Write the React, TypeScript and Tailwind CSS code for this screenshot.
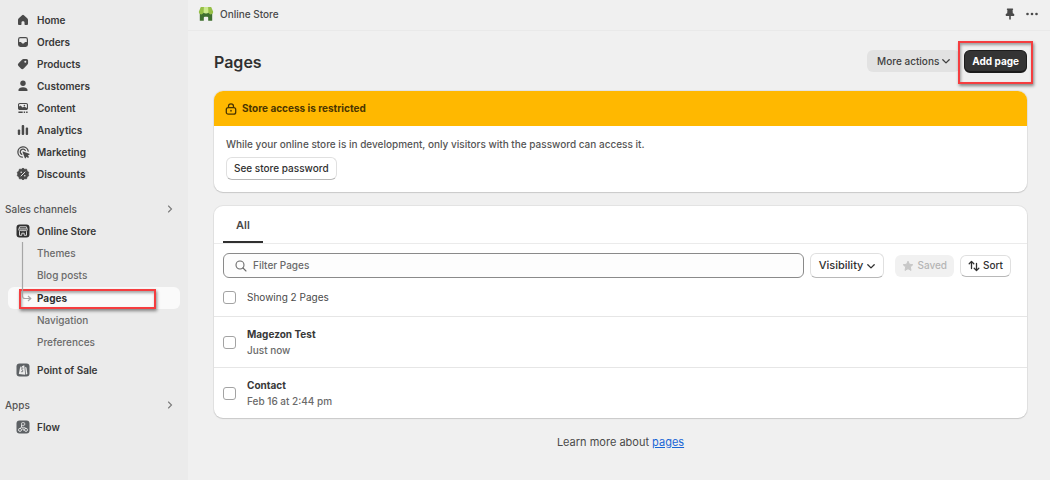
import type { ReactNode } from "react";

function Icon({ children }: { children: ReactNode }) {
  return (
    <svg viewBox="0 0 14 14" className="size-3.5 shrink-0 text-[#4a4a4a]" fill="currentColor" aria-hidden="true">
      {children}
    </svg>
  );
}

const icons = {
  home: (
    <Icon>
      <path d="M6.1 2.2a1.4 1.4 0 0 1 1.8 0l3.3 3c.5.5.8 1 .8 1.7v3.8c0 .9-.5 1.3-1.3 1.3H9.2c-.4 0-.7-.3-.7-.7V9.6c0-.8-.6-1.3-1.5-1.3s-1.5.5-1.5 1.3v1.7c0 .4-.3.7-.7.7H3.300C2.500 12 2 11.600 2 10.700V6.900c0-.7.3-1.200.8-1.700z" />
    </Icon>
  ),
  orders: (
    <Icon>
      <path
        fillRule="evenodd"
        d="M4.400 2h5.200A2.400 2.400 0 0 1 12 4.400v5.200A2.400 2.400 0 0 1 9.600 12H4.400A2.400 2.400 0 0 1 2 9.600V4.400A2.400 2.400 0 0 1 4.400 2zm0 1.200c-.7 0-1.200.5-1.200 1.200v2.700h1.500c.5 0 .7.300.9.700.2.400.5.700 1.400.7s1.200-.3 1.400-.7c.2-.4.4-.7.9-.7h1.500V4.400c0-.7-.5-1.200-1.200-1.200z"
      />
    </Icon>
  ),
  products: (
    <Icon>
      <path
        fillRule="evenodd"
        d="M7.500 2h3a1.600 1.600 0 0 1 1.600 1.600v2.500c0 .6-.2 1.100-.6 1.500l-3.800 3.900a2 2 0 0 1-2.800 0L2.500 9.100a2 2 0 0 1 0-2.800L6 2.700c.4-.5.900-.7 1.500-.7zm1.800 3.700a1 1 0 1 0 0-2 1 1 0 0 0 0 2z"
      />
    </Icon>
  ),
  customers: (
    <Icon>
      <circle cx="7" cy="4.300" r="2.700" />
      <path d="M7 8.200c2.600 0 4.400 1.200 4.600 2.800.1.600-.3 1-.9 1H3.300c-.6 0-1-.4-.9-1C2.600 9.400 4.400 8.200 7 8.200z" />
    </Icon>
  ),
  content: (
    <Icon>
      <path
        fillRule="evenodd"
        d="M3.800 2h6.400C11.200 2 12 2.800 12 3.800v3.400C12 8.200 11.200 9 10.200 9H3.800C2.800 9 2 8.200 2 7.200V3.800C2 2.800 2.800 2 3.800 2zm0 1.100a.7.700 0 0 0-.7.700v1.700l1.400-.9 2.200 1.900 1.500-.9 2.700 1.300V3.800a.7.700 0 0 0-.7-.7zm4.600.600a.8.800 0 1 1 0 1.600.8.800 0 0 1 0-1.600z"
      />
      <path d="M2.400 10.500h4.300v1.400H2.400zM7.700 10.500h1.400v1.400H7.700zM10.100 10.500h1.500v1.400h-1.500z" />
    </Icon>
  ),
  analytics: (
    <Icon>
      <rect x="1.800" y="6.500" width="2.400" height="5.500" rx="1" />
      <rect x="5.700" y="2" width="2.500" height="10" rx="1" />
      <rect x="9.700" y="4.500" width="2.400" height="7.500" rx="1" />
    </Icon>
  ),
  marketing: (
    <Icon>
      <path
        fill="none"
        stroke="currentColor"
        strokeWidth="1.300"
        strokeLinecap="round"
        d="M12.200 6.100A5.200 5.200 0 1 0 6.300 12.200M9.300 5.500A2.700 2.700 0 1 0 5.800 9.300"
      />
      <path d="M7 6.400 13.300 8.700c.5.200.5.800 0 1l-1.500.7 1.300 1.500-1.100 1.100-1.500-1.300-.7 1.400c-.2.500-.8.500-1 0L6.500 7c-.2-.4.100-.7.500-.6z" />
    </Icon>
  ),
  discounts: (
    <Icon>
      <path
        stroke="currentColor"
        strokeWidth=".8"
        strokeLinejoin="round"
        d="M7 1.100 8.600 2.300l2-.1.500 2 1.700 1.100L12.100 7l.7 1.700-1.700 1.100-.5 2-2-.1L7 12.900l-1.600-1.200-2 .1-.5-2L1.200 8.700 1.900 7l-.7-1.700 1.700-1.100.5-2 2 .1z"
      />
      <path fill="none" stroke="#ebebeb" strokeWidth="1" strokeLinecap="round" d="M5 9l4-4" />
      <circle cx="5.200" cy="5.300" r=".8" fill="#ebebeb" />
      <circle cx="8.800" cy="8.700" r=".8" fill="#ebebeb" />
    </Icon>
  ),
  store: (
    <Icon>
      <rect x=".5" y=".5" width="13" height="13" rx="3" fill="#303030" />
      <path
        fill="none"
        stroke="#e8e8e8"
        strokeWidth=".9"
        strokeLinejoin="round"
        d="M3.600 2.800h6.800l.9 2.800c0 1.600-2.100 1.600-2.200.2-.1 1.500-2.100 1.500-2.100 0 0 1.500-2 1.500-2.100 0-.1 1.400-2.200 1.400-2.200-.2zM3.500 7.300v4h2.300V9.200h2.400v2.100h2.300v-4M3.200 4.900h7.600"
      />
    </Icon>
  ),
  pos: (
    <Icon>
      <rect x=".5" y=".5" width="13" height="13" rx="3" fill="#5d6164" />
      <path fill="#ececec" d="M4.200 3.700 8.300 2.300l.9 9.500-6.400-.9zM9.200 3.800l1.300.8.900 6.300-1.500.7z" />
      <path
        fill="none"
        stroke="#5d6164"
        strokeWidth=".9"
        d="M7.300 5.200c-1-.4-1.800.2-1.700.9.100.8 1.400.9 1.300 1.900-.1.800-1 1-1.800.5M5.200 4.600c.1-1.200.7-2 1.400-2"
      />
    </Icon>
  ),
  flow: (
    <Icon>
      <rect x=".5" y=".5" width="13" height="13" rx="3" fill="#5d6164" />
      <g fill="none" stroke="#ececec" strokeWidth=".9">
        <rect x="5.500" y="2.700" width="3.200" height="2.600" rx=".8" />
        <circle cx="4" cy="9.900" r="1.500" />
        <circle cx="10" cy="9.900" r="1.500" />
        <path d="M5.500 5v2.300L4 8.400M5.500 7.300h2L10 8.400M7 10h1.500M7 10V8" />
      </g>
    </Icon>
  ),
};

function NavItem({ icon, label }: { icon: ReactNode; label: string }) {
  return (
    <li>
      <a href="#" className="flex h-[22px] items-center gap-[7px] pl-4 font-semibold text-[#383838]">
        {icon}
        {label}
      </a>
    </li>
  );
}

function SubItem({ label }: { label: string }) {
  return (
    <li>
      <a href="#" className="flex h-[22px] items-center pl-[37px] font-medium text-[#6a6a6a]">
        {label}
      </a>
    </li>
  );
}

function SectionHeading({ label }: { label: string }) {
  return (
    <button type="button" className="flex h-[22px] w-full items-center justify-between pr-3.5 pl-[5px] font-medium text-[#555555]">
      {label}
      <svg viewBox="0 0 8 8" className="size-2" fill="none" stroke="#7a7a7a" strokeWidth="1.100" strokeLinecap="round" aria-hidden="true">
        <path d="M2.500 1l3 3-3 3" />
      </svg>
    </button>
  );
}

function Chevron() {
  return (
    <svg viewBox="0 0 8 8" className="size-2 shrink-0" fill="none" stroke="currentColor" strokeWidth="1.300" strokeLinecap="round" strokeLinejoin="round" aria-hidden="true">
      <path d="M.8 2.700 4 5.900l3.200-3.200" />
    </svg>
  );
}

const checkbox = "size-[13px] shrink-0 appearance-none rounded-[3px] border border-[#a3a3a3] bg-white checked:bg-[#303030]";

const outlined = "flex shrink-0 items-center rounded-md border border-[#e0e0e0] border-b-[#b8b8b8] bg-white text-[#303030]";

const highlight =
  "pointer-events-none absolute border-2 border-[#f53d3f] shadow-[1px_2px_3px_rgba(0,0,0,0.45),inset_1px_2px_3px_rgba(0,0,0,0.35)]";

function PageRow({ id, title, date }: { id: string; title: string; date: string }) {
  return (
    <li className="flex h-[51px] items-center border-t border-[#e6e6e6] px-[9px]">
      <input id={id} type="checkbox" className={checkbox} />
      <label htmlFor={id} className="pl-[11px] leading-4">
        <span className="block font-bold text-[#383838]">{title}</span>
        <span className="block font-medium text-[#6a6a6a]">{date}</span>
      </label>
    </li>
  );
}

export default function App() {
  return (
    <div className="flex min-h-screen bg-[#f0f0f0] font-['Inter',sans-serif] text-[10px] text-[#303030]">
      <nav aria-label="Main" className="w-[188px] shrink-0 bg-[#ebebeb] pt-[9px]">
        <ul>
          <NavItem icon={icons.home} label="Home" />
          <NavItem icon={icons.orders} label="Orders" />
          <NavItem icon={icons.products} label="Products" />
          <NavItem icon={icons.customers} label="Customers" />
          <NavItem icon={icons.content} label="Content" />
          <NavItem icon={icons.analytics} label="Analytics" />
          <NavItem icon={icons.marketing} label="Marketing" />
          <NavItem icon={icons.discounts} label="Discounts" />
        </ul>
        <div className="mt-[13px]">
          <SectionHeading label="Sales channels" />
          <ul>
            <NavItem icon={icons.store} label="Online Store" />
            <li className="relative">
              <ul>
                <SubItem label="Themes" />
                <SubItem label="Blog posts" />
                <li className="relative mx-2 mt-px">
                  <a href="#" aria-current="page" className="flex h-[22px] items-center rounded-md bg-[#fafafa] pl-[29px] font-bold text-[#303030]">
                    Pages
                  </a>
                  <span className={`${highlight} top-[2px] right-6 bottom-0 left-[11px]`} />
                </li>
                <SubItem label="Navigation" />
                <SubItem label="Preferences" />
              </ul>
              <svg viewBox="0 0 12 62" className="pointer-events-none absolute top-0 left-5 h-[62px] w-3" fill="none" stroke="#a6a6a6" strokeWidth="1.200" aria-hidden="true">
                <path d="M2.500 0v54q0 2.500 2.500 2.500h5.500M8 54l2.800 2.500L8 59" />
              </svg>
            </li>
          </ul>
        </div>
        <ul className="mt-1.5">
          <NavItem icon={icons.pos} label="Point of Sale" />
        </ul>
        <div className="mt-[13px]">
          <SectionHeading label="Apps" />
          <ul>
            <NavItem icon={icons.flow} label="Flow" />
          </ul>
        </div>
      </nav>

      <div className="min-w-0 flex-1">
        <header className="flex h-[31px] items-center border-b border-[#e9e9e9] pr-3 pb-0.5 pl-2.5">
          <svg viewBox="0 0 16 16" className="size-4" aria-hidden="true">
            <path fill="#3f6f2f" d="M1.800 6.500h12.400v8.300H10.200v-3a1 1 0 0 0-1-1H6.800a1 1 0 0 0-1 1v3h-4z" />
            <path fill="#95bf47" d="M2.800 1h10.400l1.900 4.600c.3 1.700-.8 2.800-2.200 2.800-1.300 0-2.200-.8-2.500-1.900H5.600C5.300 7.600 4.400 8.400 3.100 8.400 1.700 8.400.6 7.300.9 5.600z" />
            <path fill="#cbe88c" d="M5.900 1h4.200l.3 5.300A2.400 2.400 0 0 1 8 7.600a2.400 2.400 0 0 1-2.400-1.300z" />
          </svg>
          <span className="pl-1.5 font-medium text-[#4a4a4a]">Online Store</span>
          <div className="ml-auto flex items-center gap-2.5 text-[#4a4a4a]">
            <button type="button" aria-label="Pin">
              <svg viewBox="0 0 12 12" className="size-3" fill="currentColor">
                <path d="M3.400.5h5.200c.4 0 .6.300.6.700 0 .5-.3.700-.6.900l.2 3.100c1 .4 1.600 1 1.600 1.900 0 .5-.2.800-.7.800H6.800v3L6 11.900l-.8-1v-3H2.300c-.5 0-.7-.3-.7-.8 0-.9.600-1.500 1.600-1.900l.2-3.100c-.3-.2-.6-.4-.6-.9 0-.4.200-.7.600-.7z" />
              </svg>
            </button>
            <button type="button" aria-label="More options">
              <svg viewBox="0 0 12 12" className="size-3" fill="currentColor">
                <circle cx="1.500" cy="6" r="1.300" />
                <circle cx="6" cy="6" r="1.300" />
                <circle cx="10.500" cy="6" r="1.300" />
              </svg>
            </button>
          </div>
        </header>

        <main className="pr-[23px] pb-6 pl-[26px]">
          <div className="flex h-[60px] items-center pt-px">
            <h1 className="text-base font-semibold">Pages</h1>
            <div className="ml-auto flex">
              <button type="button" className="flex h-[22px] items-center gap-[3px] rounded-md bg-[#e2e2e2] px-2.5 font-medium text-[#404040]">
                More actions
                <Chevron />
              </button>
              <div className="relative pl-1">
                <button type="button" className="relative h-[23px] rounded-md border border-[#1c1c1c] border-b-2 bg-[#343434] px-[7px] font-bold text-white">
                  Add page
                </button>
                <span className={`${highlight} -top-[9px] -right-1.5 -bottom-[11px] -left-[2px]`} />
              </div>
            </div>
          </div>

          <section className="overflow-hidden rounded-[9px] bg-white shadow-[0_1px_1px_#c9c9c9,0_0_0_1px_#e3e3e3]">
            <h2 className="flex h-[35px] items-center gap-[5px] bg-[#ffb800] pl-[11px] font-bold text-[#4a3500]">
              <svg viewBox="0 0 12 12" className="size-3" fill="none" stroke="currentColor" strokeWidth="1.300" aria-hidden="true">
                <rect x="1.300" y="4.600" width="9.400" height="6.600" rx="2" />
                <path d="M3.500 4.500V3.300a2.500 2.500 0 0 1 5 0v1.200" />
                <path strokeLinecap="round" strokeWidth="1.500" d="M6 7.500v.6" />
              </svg>
              Store access is restricted
            </h2>
            <div className="px-3 pt-2.5 pb-3">
              <p className="leading-4 font-medium text-[#555555]">
                While your online store is in development, only visitors with the password can access it.
              </p>
              <button type="button" className={`${outlined} mt-[5px] h-[23px] px-[7px] font-medium`}>
                See store password
              </button>
            </div>
          </section>

          <section className="mt-3.5 overflow-hidden rounded-[9px] bg-white shadow-[0_1px_1px_#c9c9c9,0_0_0_1px_#e3e3e3]">
            <div role="tablist" className="flex h-[38px] border-b border-[#ebebeb] px-[9px]">
              <button type="button" role="tab" aria-selected="true" className="border-b-2 border-[#303030] px-[13px] pt-[3px] text-[11px] font-semibold text-[#4a4a4a]">
                All
              </button>
            </div>
            <div className="flex items-center px-[9px] pt-[9px] pr-4">
              <label className="flex h-[25px] min-w-0 flex-1 items-center gap-1.5 rounded-md border border-[#8a8a8a] bg-[#fdfdfd] pl-[11px]">
                <svg viewBox="0 0 12 12" className="size-3 shrink-0" fill="none" stroke="#6a6a6a" strokeWidth="1.100" strokeLinecap="round" aria-hidden="true">
                  <circle cx="5" cy="5" r="4" />
                  <path d="M8 8l3 3" />
                </svg>
                <input type="text" aria-label="Filter Pages" placeholder="Filter Pages" className="min-w-0 flex-1 bg-transparent font-medium outline-none placeholder:text-[#6a6a6a]" />
              </label>
              <button type="button" className={`${outlined} ml-1.5 h-[25px] gap-1 px-2 text-[11px] font-medium`}>
                Visibility
                <Chevron />
              </button>
              <button type="button" disabled className="ml-[11px] flex h-[22px] shrink-0 items-center gap-[3px] rounded-md bg-[#f1f1f1] px-[7px] font-medium text-[#b5b5b5]">
                <svg viewBox="0 0 12 12" className="size-3" fill="#c8c8c8" stroke="#c8c8c8" strokeLinejoin="round" aria-hidden="true">
                  <path d="M6 1.200l1.400 3.100 3.400.4-2.500 2.300.7 3.400-3-1.700-3 1.700.7-3.400L1.200 4.700l3.400-.4z" />
                </svg>
                Saved
              </button>
              <button type="button" className={`${outlined} ml-1.5 h-[22px] gap-[3px] px-[7px] font-medium`}>
                <svg viewBox="0 0 12 12" className="size-3" fill="none" stroke="currentColor" strokeWidth="1.300" strokeLinecap="round" strokeLinejoin="round" aria-hidden="true">
                  <path d="M1.200 3.700 3.500 1.400l2.300 2.300M3.500 1.600v7M6.200 8.300l2.300 2.300 2.300-2.300M8.500 10.400v-7" />
                </svg>
                Sort
              </button>
            </div>
            <div className="flex h-[38px] items-center px-[9px]">
              <input id="select-all" type="checkbox" className={checkbox} />
              <label htmlFor="select-all" className="pl-[11px] text-[#4a4a4a]">
                Showing 2 Pages
              </label>
            </div>
            <ul>
              <PageRow id="page-magezon" title="Magezon Test" date="Just now" />
              <PageRow id="page-contact" title="Contact" date="Feb 16 at 2:44 pm" />
            </ul>
          </section>

          <p className="mt-4 text-center text-[11px] leading-4 text-[#4a4a4a]">
            Learn more about{" "}
            <a href="#" className="text-[#1a66d6] underline">
              pages
            </a>
          </p>
        </main>
      </div>
    </div>
  );
}
